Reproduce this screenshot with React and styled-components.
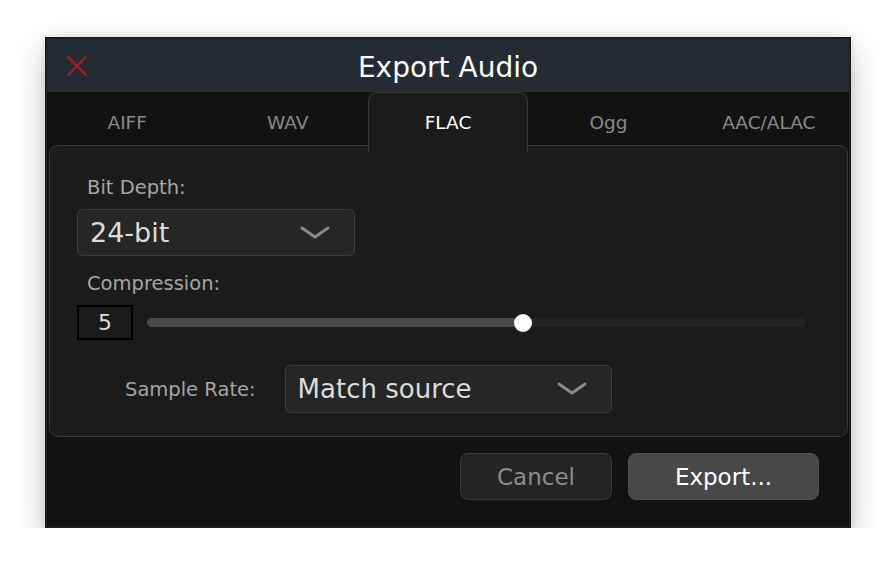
import React from 'react';
import styled, { createGlobalStyle } from 'styled-components';

const GlobalStyle = createGlobalStyle`
  html, body {
    margin: 0;
    background: #ffffff;
  }
  body {
    font-family: "DejaVu Sans", "Liberation Sans", sans-serif;
  }
`;

const Page = styled.div`
  padding: 37px 0 0 45px;
`;

const Dialog = styled.div`
  width: 802px;
  border: 2px solid #1c1c1c;
  background: #121212;
  box-shadow: 0 12px 30px rgba(0, 0, 0, 0.24), 0 0 8px rgba(0, 0, 0, 0.1);
`;

const TitleBar = styled.div`
  display: grid;
  grid-template-columns: 1fr auto 1fr;
  align-items: center;
  height: 53px;
  background: #252b32;
`;

const CloseButton = styled.button`
  justify-self: start;
  display: flex;
  align-items: center;
  margin-left: 19px;
  padding: 0;
  border: none;
  background: none;
  cursor: pointer;
`;

const Title = styled.h1`
  margin: 0;
  padding-top: 3px;
  font-size: 28px;
  font-weight: normal;
  color: #ffffff;
`;

const Tabs = styled.div`
  display: flex;
  height: 53px;
`;

const Tab = styled.div`
  flex: 1;
  height: 60px;
  box-sizing: border-box;
  display: flex;
  align-items: center;
  justify-content: center;
  font-size: 18.5px;
  color: ${p => (p.$active ? '#ffffff' : '#8a8a8a')};
  background: ${p => (p.$active ? '#1b1b1b' : 'transparent')};
  border: 1.5px solid ${p => (p.$active ? '#3a3a3a' : 'transparent')};
  border-bottom: none;
  border-radius: 9px 9px 0 0;
  position: relative;
  z-index: ${p => (p.$active ? 1 : 0)};
  cursor: pointer;
`;

const Panel = styled.div`
  margin: 0 1px 0 2px;
  padding: 30px 0 23px 27px;
  background: #1b1b1b;
  border: 1.5px solid #383838;
  border-radius: 9px;
`;

const Label = styled.div`
  font-size: 19.5px;
  color: #a6a6a6;
  padding-left: ${p => p.$indent || 0}px;
`;

const Select = styled.div`
  box-sizing: border-box;
  width: ${p => p.$width}px;
  height: ${p => p.$height}px;
  margin-top: ${p => p.$top || 0}px;
  display: flex;
  align-items: center;
  justify-content: space-between;
  padding: 0 24px 0 12px;
  background: #262626;
  border: 1.5px solid #3c3c3c;
  border-radius: 6px;
  font-size: ${p => p.$size || 26}px;
  color: #dcdcdc;
`;

const Chevron = () => (
  <svg width="30" height="14" viewBox="0 0 30 14">
    <path d="M2 2 L15 11 L28 2" fill="none" stroke="#8a8a8a" strokeWidth="3" strokeLinecap="round" strokeLinejoin="round" />
  </svg>
);

const Section = styled.div`
  margin-top: ${p => p.$top}px;
`;

const SliderRow = styled.div`
  display: flex;
  align-items: center;
  gap: 14px;
  margin-top: 10px;
  padding-right: 41px;
`;

const ValueBox = styled.div`
  box-sizing: border-box;
  width: 56px;
  height: 35px;
  display: flex;
  align-items: center;
  justify-content: center;
  border: 2px solid #000000;
  font-size: 22px;
  color: #dcdcdc;
`;

const Track = styled.div`
  flex: 1;
  height: 9px;
  border-radius: 5px;
  background: #232323;
  position: relative;
`;

const Fill = styled.div`
  width: ${p => p.$percent}%;
  height: 100%;
  border-radius: 5px 0 0 5px;
  background: #4a4a4a;
`;

const Thumb = styled.div`
  position: absolute;
  top: 50%;
  left: ${p => p.$percent}%;
  width: 18px;
  height: 18px;
  margin: -9px 0 0 -9px;
  border-radius: 50%;
  background: #ffffff;
`;

const RateRow = styled.div`
  display: flex;
  align-items: center;
  gap: 29px;
  margin-top: 25px;
  padding-left: 48px;
`;

const Footer = styled.div`
  display: flex;
  justify-content: flex-end;
  gap: 16px;
  padding: 16px 30px 26px;
`;

const Button = styled.button`
  box-sizing: border-box;
  width: ${p => p.$width}px;
  height: 47px;
  padding: 0;
  border-radius: 8px;
  font-family: inherit;
  font-size: 23px;
  cursor: pointer;
  color: ${p => (p.$primary ? '#ffffff' : '#8c8c8c')};
  background: ${p => (p.$primary ? '#484848' : '#242424')};
  border: 1.5px solid ${p => (p.$primary ? '#4f4f4f' : '#3a3a3a')};
`;

const tabs = ['AIFF', 'WAV', 'FLAC', 'Ogg', 'AAC/ALAC'];

export default function App() {
  const compression = 57;

  return (
    <Page>
      <GlobalStyle />
      <Dialog>
        <TitleBar>
          <CloseButton aria-label="Close">
            <svg width="22" height="22" viewBox="0 0 22 22">
              <path d="M1.5 1.5 L20.5 20.5 M20.5 1.5 L1.5 20.5" stroke="#a51b2b" strokeWidth="2.4" />
            </svg>
          </CloseButton>
          <Title>Export Audio</Title>
          <div />
        </TitleBar>
        <Tabs>
          {tabs.map(t => (
            <Tab key={t} $active={t === 'FLAC'}>{t}</Tab>
          ))}
        </Tabs>
        <Panel>
          <Label $indent={10}>Bit Depth:</Label>
          <Select $width={278} $height={47} $top={10} $size={27}>
            <span>24-bit</span>
            <Chevron />
          </Select>
          <Section $top={16}>
            <Label $indent={10}>Compression:</Label>
            <SliderRow>
              <ValueBox>5</ValueBox>
              <Track>
                <Fill $percent={compression} />
                <Thumb $percent={compression} />
              </Track>
            </SliderRow>
          </Section>
          <RateRow>
            <Label>Sample Rate:</Label>
            <Select $width={327} $height={48}>
              <span>Match source</span>
              <Chevron />
            </Select>
          </RateRow>
        </Panel>
        <Footer>
          <Button $width={152}>Cancel</Button>
          <Button $width={191} $primary>Export...</Button>
        </Footer>
      </Dialog>
    </Page>
  );
}
